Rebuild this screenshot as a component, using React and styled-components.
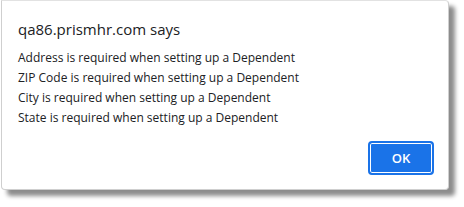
import React from "react"
import styled, { createGlobalStyle } from "styled-components"

const Global = createGlobalStyle`
  html, body {
    margin: 0;
    padding: 0;
    background: #ffffff;
  }
  body {
    font-family: "Segoe UI", "Open Sans", "Noto Sans", sans-serif;
  }
`

const Page = styled.div`
  width: 464px;
  height: 207px;
  padding: 0 0 0 1px;
  box-sizing: border-box;
  overflow: hidden;
`

const Dialog = styled.div`
  width: 448px;
  height: 190px;
  box-sizing: border-box;
  border: 1px solid #cfcfcf;
  border-top-color: #e2e2e2;
  border-radius: 0 4px 4px 4px;
  background: #fff;
  box-shadow: 6px 6px 4px rgba(0, 0, 0, 0.45);
  padding: 17px 14px 14px 16px;
  display: flex;
  flex-direction: column;
  color: #202124;
`

const Title = styled.h1`
  margin: 0;
  font-size: 15px;
  font-weight: 400;
  line-height: 22px;
`

const Messages = styled.div`
  display: flex;
  flex-direction: column;
  flex: 1;
  padding-top: 8px;
`

const Line = styled.div`
  font-size: 12px;
  line-height: 20px;
  white-space: nowrap;
`

const Footer = styled.div`
  display: flex;
  justify-content: flex-end;
`

const OkButton = styled.button`
  width: 66px;
  height: 34px;
  border: 2px solid #1a73e8;
  border-radius: 4px;
  background: #1a73e8;
  box-shadow: inset 0 0 0 1px #ffffff;
  color: #fff;
  font-family: inherit;
  font-size: 13px;
  font-weight: 600;
  padding: 0;
`

const messages = [
  "Address is required when setting up a Dependent",
  "ZIP Code is required when setting up a Dependent",
  "City is required when setting up a Dependent",
  "State is required when setting up a Dependent",
]

export default function App() {
  return (
    <Page>
      <Global />
      <Dialog>
        <Title>qa86.prismhr.com says</Title>
        <Messages>
          {messages.map((m) => (
            <Line key={m}>{m}</Line>
          ))}
        </Messages>
        <Footer>
          <OkButton>OK</OkButton>
        </Footer>
      </Dialog>
    </Page>
  )
}
